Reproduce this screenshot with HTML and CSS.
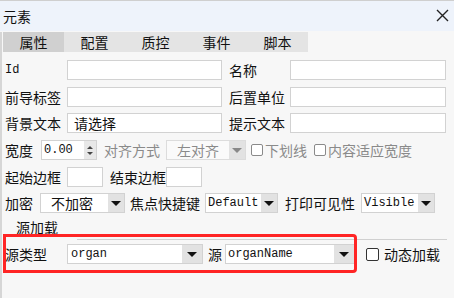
FILE: index.html
```html
<!DOCTYPE html>
<html lang="zh-CN">
<head>
    <meta charset="UTF-8">
    <meta name="viewport" content="width=device-width, initial-scale=1.0">
    <title>元素</title>
    <link rel="stylesheet" href="styles.css">
</head>
<body>
    <div class="titlebar">
        <span class="title">元素</span>
        <svg class="close" width="13" height="13" viewBox="0 0 13 13">
            <path d="M1 1 L12 12 M12 1 L1 12" stroke="#222" stroke-width="1.4" fill="none"/>
        </svg>
    </div>
    <div class="panel">
        <div class="tabs">
            <span class="tab active">属性</span>
            <span class="tab">配置</span>
            <span class="tab">质控</span>
            <span class="tab">事件</span>
            <span class="tab">脚本</span>
        </div>
        <div class="form">
            <div class="row">
                <span class="lbl mono">Id</span>
                <input class="box w-left" type="text">
                <span class="lbl lbl-right">名称</span>
                <input class="box w-right" type="text">
            </div>
            <div class="row">
                <span class="lbl">前导标签</span>
                <input class="box w-left" type="text">
                <span class="lbl lbl-right">后置单位</span>
                <input class="box w-right" type="text">
            </div>
            <div class="row">
                <span class="lbl">背景文本</span>
                <input class="box w-left" type="text" value="请选择">
                <span class="lbl lbl-right">提示文本</span>
                <input class="box w-right" type="text">
            </div>
            <div class="row">
                <span class="txt">宽度</span>
                <div class="number">
                    <span class="num-val">0.00</span>
                    <span class="spin"><i class="up"></i><i class="down"></i></span>
                </div>
                <span class="txt muted ml7">对齐方式</span>
                <div class="select disabled sel-align">
                    <span class="sel-val cjk">左对齐</span>
                    <span class="arrow"><i></i></span>
                </div>
                <span class="check muted-check ml5"></span>
                <span class="txt muted">下划线</span>
                <span class="check muted-check ml7"></span>
                <span class="txt muted">内容适应宽度</span>
            </div>
            <div class="row">
                <span class="lbl">起始边框</span>
                <input class="box w-small" type="text">
                <span class="txt ml7">结束边框</span>
                <input class="box w-small ml5" type="text">
            </div>
            <div class="row">
                <span class="txt">加密</span>
                <div class="select sel-encrypt">
                    <span class="sel-val cjk">不加密</span>
                    <span class="arrow"><i></i></span>
                </div>
                <span class="txt ml5">焦点快捷键</span>
                <div class="select sel-key ml5">
                    <span class="sel-val mono">Default</span>
                    <span class="arrow"><i></i></span>
                </div>
                <span class="txt ml7">打印可见性</span>
                <div class="select sel-print">
                    <span class="sel-val mono">Visible</span>
                    <span class="arrow"><i></i></span>
                </div>
            </div>
            <div class="source">
                <div class="legend">源加载</div>
                <div class="fs-line"></div>
                <div class="row">
                    <span class="lbl">源类型</span>
                    <div class="select sel-type">
                        <span class="sel-val mono">organ</span>
                        <span class="arrow wide"><i></i></span>
                    </div>
                    <span class="txt ml5">源</span>
                    <div class="select sel-src">
                        <span class="sel-val mono">organName</span>
                        <span class="arrow wide"><i></i></span>
                    </div>
                    <span class="check dark-check"></span>
                    <span class="txt">动态加载</span>
                </div>
                <div class="highlight"></div>
            </div>
        </div>
    </div>
</body>
</html>
```

FILE: styles.css
```css
body {
    margin: 0;
    width: 454px;
    height: 298px;
    overflow: hidden;
    background: #f7f7f7;
    font-family: "Noto Sans CJK SC", "Liberation Sans", sans-serif;
    font-size: 14px;
    color: #111;
}
.titlebar {
    height: 30px;
    border-top: 1px solid #cfcfcf;
    background: #eef3fb;
    display: flex;
    align-items: center;
    justify-content: space-between;
    padding: 0 5px 0 3px;
}
.title {
    line-height: 14px;
    margin-top: -1px;
}
.close {
    display: block;
    margin-top: -2px;
}
.panel {
    border-left: 2px solid #d6d6d6;
    height: 267px;
}
.tabs {
    display: flex;
    margin: 1px 0 0 1px;
    width: 305px;
    background: #e4e4e4;
}
.tab {
    width: 61px;
    height: 20px;
    line-height: 20px;
    text-align: center;
}
.tab.active {
    background: #d0d0d0;
}
.form {
    display: flex;
    flex-direction: column;
    gap: 6.7px;
    padding: 8px 0 0 3px;
}
.row {
    display: flex;
    align-items: center;
    height: 20px;
}
.lbl {
    width: 62px;
    flex: none;
    line-height: 14px;
}
.lbl-right {
    width: 61px;
    margin-left: 7px;
}
.txt {
    flex: none;
    line-height: 14px;
}
.mono {
    font-family: "Liberation Mono", monospace;
    font-size: 12px;
}
.cjk {
    font-family: "Noto Sans CJK SC", sans-serif;
    font-size: 14px;
}
.muted {
    color: #8a8a8a;
}
.ml5 { margin-left: 5px; }
.ml7 { margin-left: 7px; }
.box {
    box-sizing: border-box;
    height: 20px;
    margin: 0;
    border: 1px solid #d2d2d2;
    background: #fff;
    padding: 0 6px;
    font-family: "Noto Sans CJK SC", sans-serif;
    font-size: 14px;
    color: #111;
    outline: none;
}
.w-left { width: 155px; }
.w-right { width: 156px; }
.w-small { width: 36px; }
.number {
    box-sizing: border-box;
    width: 56px;
    height: 20px;
    margin-left: 8px;
    border: 1px solid #d2d2d2;
    background: #fff;
    display: flex;
    align-items: stretch;
}
.num-val {
    flex: 1;
    font-family: "Liberation Mono", monospace;
    font-size: 12px;
    line-height: 18px;
    padding-left: 2px;
}
.spin {
    width: 12px;
    background: #e8e8e8;
    display: flex;
    flex-direction: column;
    align-items: center;
    justify-content: center;
    gap: 3px;
}
.spin i {
    width: 0;
    height: 0;
    border-left: 3px solid transparent;
    border-right: 3px solid transparent;
}
.spin .up { border-bottom: 3px solid #444; }
.spin .down { border-top: 3px solid #444; }
.select {
    box-sizing: border-box;
    height: 20px;
    border: 1px solid #d2d2d2;
    background: #fff;
    display: flex;
    align-items: stretch;
    flex: none;
}
.sel-val {
    flex: 1;
    line-height: 18px;
    padding-left: 2px;
    white-space: nowrap;
    overflow: hidden;
}
.arrow {
    width: 16px;
    background: #e2e2e2;
    display: flex;
    align-items: center;
    justify-content: center;
}
.arrow.wide {
    width: 20px;
}
.arrow i {
    width: 0;
    height: 0;
    border-left: 5px solid transparent;
    border-right: 5px solid transparent;
    border-top: 5px solid #111;
}
.select.disabled {
    background: #fafafa;
    border-color: #dcdcdc;
}
.select.disabled .sel-val {
    color: #8a8a8a;
}
.select.disabled .arrow i {
    border-top-color: #888;
}
.sel-align {
    width: 80px;
    margin-left: 6px;
}
.sel-align .sel-val {
    padding-left: 10px;
}
.sel-encrypt {
    width: 85px;
    margin-left: 7px;
}
.sel-encrypt .sel-val {
    padding-left: 10px;
}
.sel-key {
    width: 73px;
}
.sel-print {
    width: 74px;
    margin-left: 6px;
}
.sel-type {
    width: 136px;
}
.sel-type .sel-val {
    padding-left: 3px;
}
.sel-src {
    width: 130px;
    margin-left: 3px;
}
.check {
    box-sizing: border-box;
    width: 12px;
    height: 12px;
    border-radius: 2px;
    flex: none;
    margin-right: 2px;
}
.muted-check {
    border: 1px solid #8a8a8a;
    background: #fff;
}
.dark-check {
    width: 13px;
    height: 13px;
    border: 1px solid #333;
    background: #fff;
    margin-left: 11px;
    margin-right: 5px;
}
.source {
    position: relative;
}
.legend {
    height: 19px;
    padding-left: 11px;
    line-height: 14px;
}
.fs-line {
    margin-left: 72px;
    width: 370px;
    border-top: 1px solid #d0d0d0;
}
.source .row {
    margin-top: 4px;
}
.highlight {
    position: absolute;
    top: 14px;
    left: -2px;
    width: 354px;
    height: 39px;
    box-sizing: border-box;
    border: 3px solid #ff2525;
    border-radius: 0 4px 4px 0;
}
```
